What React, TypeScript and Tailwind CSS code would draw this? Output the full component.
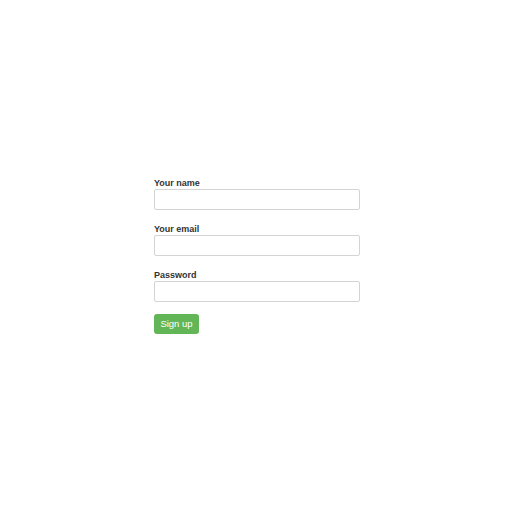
export default function App() {
  const fields = [
    { label: "Your name", type: "text" },
    { label: "Your email", type: "email" },
    { label: "Password", type: "password" },
  ];
  return (
    <div className="w-[512px] h-[512px] bg-white flex items-center justify-center" style={{ fontFamily: '"Liberation Sans", Arial, sans-serif' }}>
      <form className="w-[206px] ml-[2px] mb-[2px] flex flex-col">
        {fields.map((f) => (
          <div key={f.label} className="flex flex-col mb-[13px]">
            <label className="text-[9px] leading-[12px] font-bold text-[#333]">{f.label}</label>
            <input type={f.type} className="h-[21px] border border-[#d4d4d4] rounded-[2px] bg-white outline-none" />
          </div>
        ))}
        <button type="button" className="-mt-[1px] w-[45px] h-[20px] rounded-[3px] bg-[#62b657] text-white text-[9.5px] leading-[20px]">
          Sign up
        </button>
      </form>
    </div>
  );
}
